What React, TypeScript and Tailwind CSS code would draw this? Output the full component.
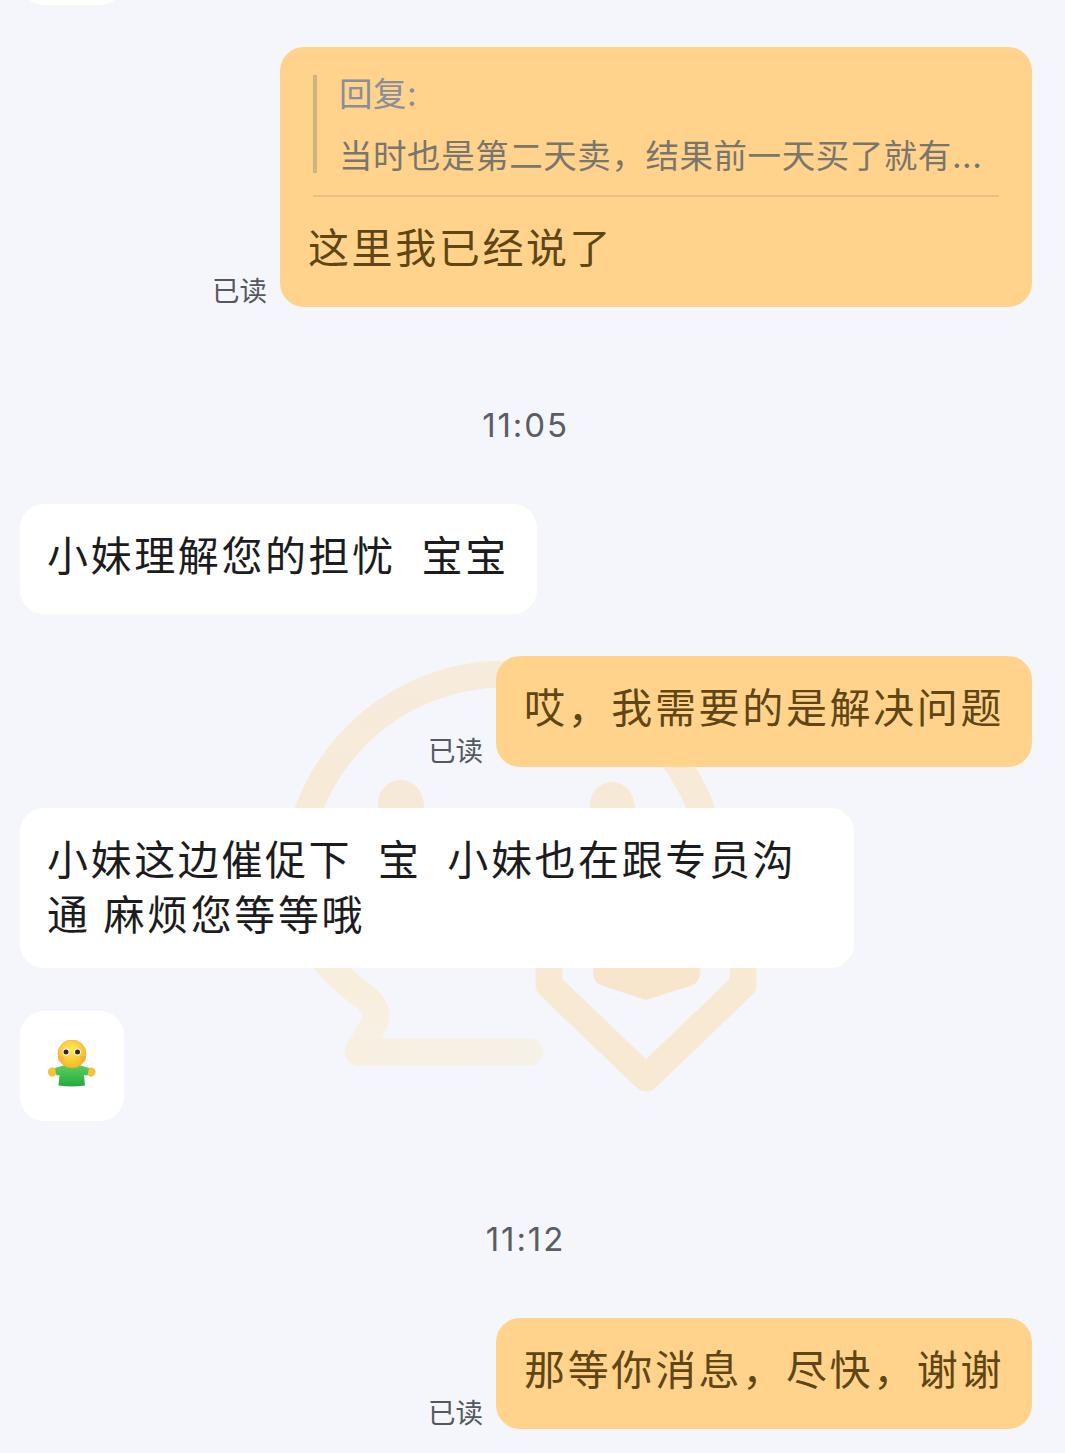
const fontStack = { fontFamily: '"Inter", "Noto Sans CJK SC", sans-serif' };

function Watermark() {
  return (
    <svg
      className="absolute left-0 top-0"
      width="1065"
      height="1453"
      viewBox="0 0 1065 1453"
      fill="none"
      aria-hidden="true"
    >
      <defs>
        <linearGradient id="wm" x1="0" y1="660" x2="0" y2="1065" gradientUnits="userSpaceOnUse">
          <stop offset="0" stopColor="#F6ECDD" />
          <stop offset="0.35" stopColor="#F7EAD6" />
          <stop offset="0.8" stopColor="#F8EEDD" />
          <stop offset="1" stopColor="#F7F1E7" />
        </linearGradient>
        <linearGradient id="tail" x1="345" y1="0" x2="545" y2="0" gradientUnits="userSpaceOnUse">
          <stop offset="0" stopColor="#F8EFE0" />
          <stop offset="1" stopColor="#F6F1E9" />
        </linearGradient>
      </defs>
      <g strokeWidth="27" strokeLinecap="round" strokeLinejoin="round">
        <path
          stroke="url(#wm)"
          d="M358 1052 L374 1024 Q380 1010 366 998 Q298 950 295 884 A210 210 0 0 1 505 674 A210 210 0 0 1 715 884"
        />
        <path stroke="url(#tail)" d="M530 1052 L358 1052" />
        <path stroke="#F8E9D3" d="M549 960 L549 985 L646 1078 L743 985 L743 960" />
      </g>
      <path d="M378 840 V804 C378 790 388 780 401 780 C414 780 424 792 424 808 V840 Z" fill="#F6E9D6" />
      <path d="M590 840 V806 C590 792 600 782 612 782 C625 782 635 794 635 810 V840 Z" fill="#F6E9D6" />
      <path d="M593 940 H700 V972 Q700 983 690 986 L646 1000 L603 986 Q593 983 593 972 Z" fill="#F8E6CC" />
    </svg>
  );
}

function Emoji() {
  return (
    <svg width="48" height="48" viewBox="0 0 48 48" aria-hidden="true">
      <defs>
        <radialGradient id="head" cx="0.45" cy="0.35" r="0.7">
          <stop offset="0" stopColor="#FFE95A" />
          <stop offset="1" stopColor="#F9B41E" />
        </radialGradient>
        <linearGradient id="shirt" x1="0" y1="0" x2="0" y2="1">
          <stop offset="0" stopColor="#5AD05C" />
          <stop offset="1" stopColor="#27A83F" />
        </linearGradient>
      </defs>
      <circle cx="4.3" cy="32" r="4.2" fill="#FBC32E" stroke="#E5A94A" strokeWidth="0.5" />
      <circle cx="43" cy="32" r="4.2" fill="#FBC32E" stroke="#E5A94A" strokeWidth="0.5" />
      <path d="M7 28 L17 25 H31 L41 28 L39.5 35.5 L36 35 L37 45.5 Q24 47.5 10.5 45.5 L11.5 35 L8.5 35.5 Z" fill="url(#shirt)" />
      <circle cx="24" cy="14" r="14" fill="url(#head)" stroke="#E8A552" strokeWidth="0.7" />
      <circle cx="18" cy="12" r="3.4" fill="#fff" />
      <circle cx="29.5" cy="12" r="3.4" fill="#fff" />
      <circle cx="18" cy="12" r="2.5" fill="#3A2326" />
      <circle cx="29.5" cy="12" r="2.5" fill="#3A2326" />
      <circle cx="13" cy="19" r="3" fill="#F9A13C" opacity="0.5" />
      <circle cx="35" cy="19" r="3" fill="#F9A13C" opacity="0.5" />
    </svg>
  );
}

function Read() {
  return <span className="text-[27.5px] leading-[36px] text-[#55585f] mb-[-2px] shrink-0">已读</span>;
}

function Outgoing({ text }: { text: string }) {
  return (
    <div className="flex justify-end items-end gap-[13px] pr-[33px]">
      <Read />
      <div className="rounded-[24px] bg-[#FFD38C] w-[536px] h-[111px] px-[28px] pt-[25px] text-[41px] leading-[55px] tracking-[2.65px] text-[#5F4614] whitespace-pre">
        {text}
      </div>
    </div>
  );
}

function Incoming({ className, children }: { className: string; children: React.ReactNode }) {
  return (
    <div className={`ml-[20px] rounded-[24px] bg-white px-[27px] pt-[25px] text-[41px] leading-[55px] tracking-[2.6px] [word-spacing:-1.25px] text-[#1C1C1E] whitespace-pre ${className}`}>
      {children}
    </div>
  );
}

function Time({ text }: { text: string }) {
  return <div className="pr-[14px] text-center text-[33px] leading-[40px] tracking-[1.9px] text-[#5A5D63]">{text}</div>;
}

export default function App() {
  return (
    <div className="relative h-[1453px] w-full overflow-hidden bg-[#F4F6FB]" style={fontStack}>
      <Watermark />
      <div className="relative flex flex-col">
        <div className="ml-[20px] h-[5px] w-[104px] overflow-hidden">
          <div className="mt-[-105px] h-[110px] rounded-[24px] bg-white" />
        </div>

        <div className="mt-[42px] flex justify-end items-end gap-[13px] pr-[33px]">
          <Read />
          <div className="h-[260px] w-[752px] rounded-[24px] bg-[#FFD38C] pt-[28px]">
            <div className="mx-[33px] border-b-2 border-[#E9BF85] pb-[22px]">
              <div className="border-l-[4px] border-[#D2B27F] pl-[24px] text-[33.5px] tracking-[0.55px]">
                <div className="h-[38px] -ml-[2px] leading-[38px] text-[#8A8E98]">回复:</div>
                <div className="mt-[22px] h-[38px] -ml-[2px] pt-[2px] leading-[38px] whitespace-pre text-[#7A766C]">当时也是第二天卖，结果前一天买了就有...</div>
              </div>
            </div>
            <div className="mt-[24px] px-[28px] text-[41px] leading-[55px] tracking-[2.6px] text-[#5F4614]">这里我已经说了</div>
          </div>
        </div>

        <div className="mt-[98px]">
          <Time text="11:05" />
        </div>

        <Incoming className="mt-[59px] h-[110px] w-[517px]">小妹理解您的担忧  宝宝</Incoming>

        <div className="mt-[42px]">
          <Outgoing text="哎，我需要的是解决问题" />
        </div>

        <Incoming className="mt-[41px] h-[160px] w-[834px]">
          {'小妹这边催促下  宝  小妹也在跟专员沟\n通 麻烦您等等哦'}
        </Incoming>

        <div className="ml-[20px] mt-[43px] flex h-[110px] w-[104px] items-start justify-center rounded-[24px] bg-white pt-[29px]">
          <Emoji />
        </div>

        <div className="mt-[98px]">
          <Time text="11:12" />
        </div>

        <div className="mt-[59px]">
          <Outgoing text="那等你消息，尽快，谢谢" />
        </div>
      </div>
    </div>
  );
}
